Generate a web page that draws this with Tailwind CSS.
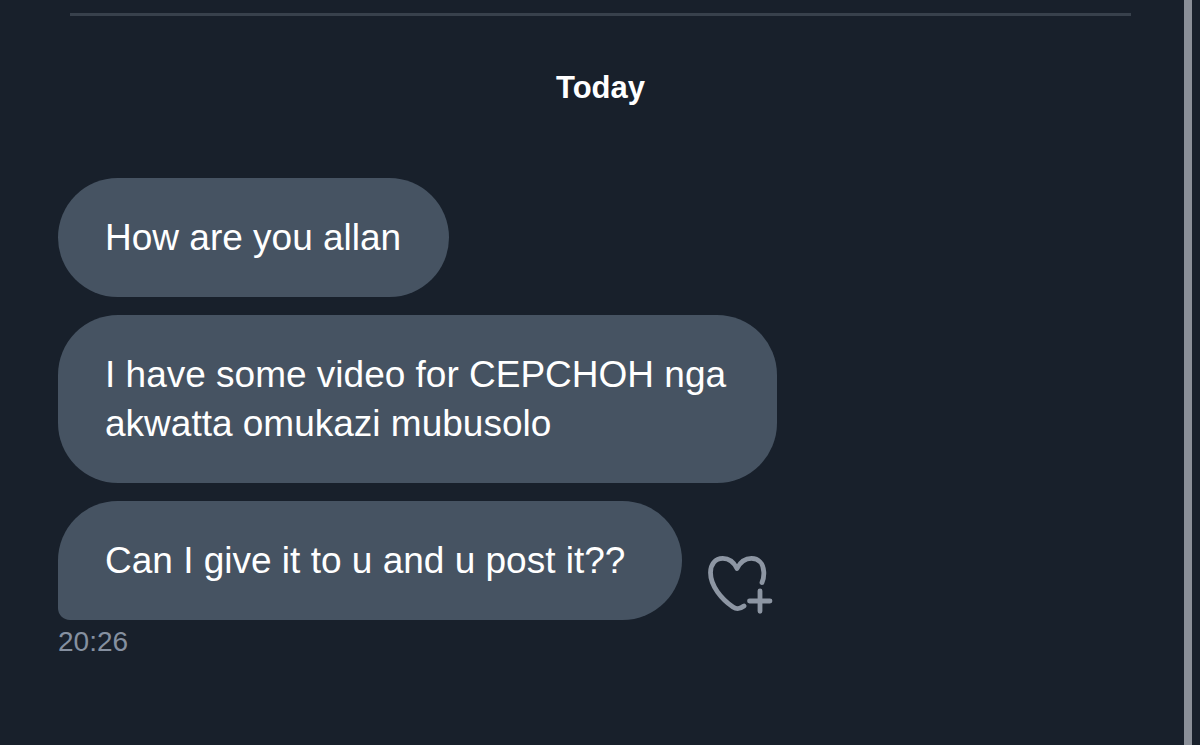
<!DOCTYPE html>
<html lang="en">
<head>
    <meta charset="UTF-8">
    <meta name="viewport" content="width=device-width, initial-scale=1.0">
    <title>Messages</title>
    <script src="https://cdn.jsdelivr.net/npm/@tailwindcss/browser@4"></script>
</head>
<body class="bg-[#18202b] font-['Liberation_Sans',Arial,sans-serif] text-white">
    <div class="flex min-h-screen">
        <!-- Conversation -->
        <main class="flex-1 pl-[58px] pr-[53px] pt-[13px]">
            <hr class="ml-3 border-0 h-[3px] bg-[#38414c]">

            <h2 class="mt-[50px] ml-3 text-center text-[31px] leading-[44px] font-bold">Today</h2>

            <!-- Messages -->
            <div class="mt-[68px] flex flex-col items-start gap-[18px] text-[37px] leading-[49px]">
                <p class="bg-[#465362] rounded-[60px] px-12 py-[35px] pl-[47px]">How are you allan</p>
                <p class="bg-[#465362] rounded-[60px] px-12 py-[35px] pl-[47px] max-w-[719px]">I have some video for CEPCHOH nga akwatta omukazi mubusolo</p>
                <div class="flex items-end gap-[26px]">
                    <p class="bg-[#465362] rounded-[60px] rounded-bl-xl px-12 py-[35px] pl-[47px] min-w-[624px]">Can I give it to u and u post it??</p>
                    <button type="button" aria-label="Add reaction" class="mb-[5px] shrink-0 text-[#8d96a3]">
                        <svg class="block w-[66px] h-[60px]" viewBox="0 0 66 60" fill="none" stroke="currentColor" stroke-width="4.8" stroke-linecap="round" stroke-linejoin="round">
                            <path d="M54 27.500C55.500 24 56 20.500 55.800 17C55.300 8.500 50.500 3.400 43.500 3.400C36.500 3.400 32 7.500 29 13.500C26 7.500 21.500 3.400 14.800 3.400C7 3.400 2.500 9.500 2.500 17.500C2.500 31 13.500 44 25 52C28.600 54.400 31.500 54.400 36 51" />
                            <path d="M52 35.800V56.300M41.500 46H62" />
                        </svg>
                    </button>
                </div>
            </div>
            <time class="block mt-1 text-[28px] leading-9 text-[#8590a0]">20:26</time>
        </main>

        <!-- Scrollbar -->
        <div class="w-2 mr-2 shrink-0 bg-[#8a8f98]"></div>
    </div>
</body>
</html>
